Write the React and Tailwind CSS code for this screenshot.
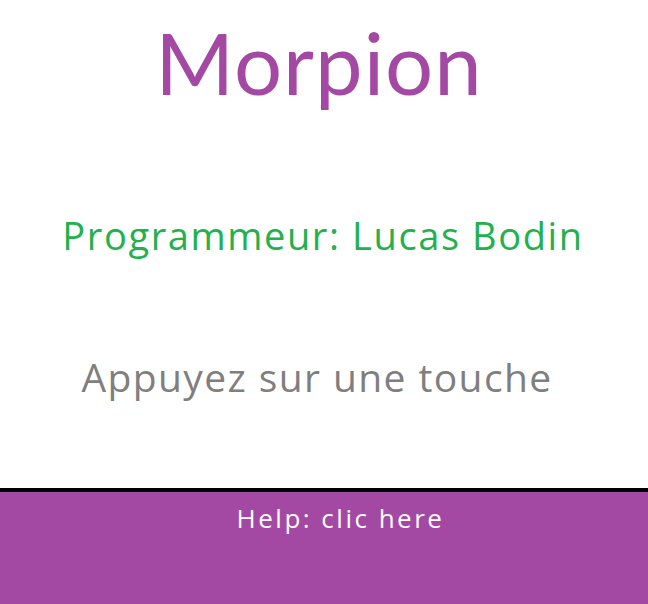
export default function App() {
  return (
    <div className="w-[648px] h-[604px] bg-white flex flex-col overflow-hidden">
      <div className="h-[488px] flex flex-col">
        <div className="mt-[20px] h-[85px] text-[85px] leading-none text-center text-[#A349A4] pr-[10px] tracking-[1px] font-['Lato',sans-serif]">
          Morpion
        </div>
        <div className="mt-[111px] h-[38px] text-[38px] leading-none text-center text-[#22B14C] pr-[2px] tracking-[1.6px] font-['Open_Sans',sans-serif]">
          Programmeur: Lucas Bodin
        </div>
        <div className="mt-[103px] h-[39px] text-[39px] leading-none text-center text-[#7F7F7F] pr-[14px] tracking-[1.4px] font-['Open_Sans',sans-serif]">
          Appuyez sur une touche
        </div>
      </div>
      <div className="h-[4px] bg-black" />
      <div className="flex-1 bg-[#A349A4] pt-[13px]">
        <div className="text-[26px] leading-none text-center text-white pl-[33px] tracking-[2.5px] font-['Open_Sans',sans-serif]">
          Help: clic here
        </div>
      </div>
    </div>
  );
}
